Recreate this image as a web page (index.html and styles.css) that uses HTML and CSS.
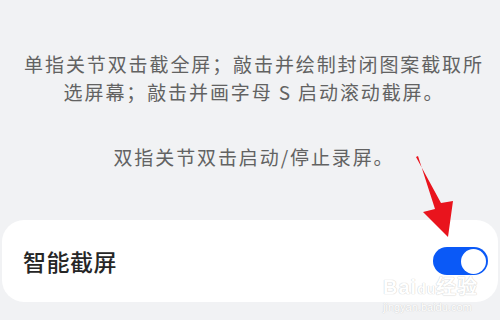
FILE: index.html
```html
<!DOCTYPE html>
<html lang="zh-CN">
<head>
<meta charset="utf-8">
<link rel="stylesheet" href="styles.css">
</head>
<body>
<div class="page">
  <div class="desc">
    <p class="para">单指关节双击截全屏；敲击并绘制封闭图案截取所选屏幕；敲击并画字母 S 启动滚动截屏。</p>
    <p class="para para2">双指关节双击启动/停止录屏。</p>
  </div>
  <div class="card">
    <span class="label">智能截屏</span>
    <span class="toggle"><span class="knob"></span></span>
  </div>
  <svg class="arrow" width="500" height="320" viewBox="0 0 500 320">
    <polygon points="416,157 441,203 453,201 448,237 423,212 435,209 418,156" fill="#e9141d"/>
  </svg>
  <div class="watermark">
    <div class="wm-main">Bai<span class="wm-du">du</span>经验</div>
    <div class="wm-sub">jingyan.baidu.com</div>
  </div>
</div>
</body>
</html>
```
FILE: styles.css
```css
html, body {
  margin: 0;
  padding: 0;
}
body {
  width: 500px;
  height: 320px;
  background: #f1f2f4;
  font-family: "Noto Sans CJK SC", "Noto Sans", sans-serif;
  overflow: hidden;
}
.page {
  position: relative;
  width: 500px;
  height: 320px;
  display: flex;
  flex-direction: column;
}
.desc {
  padding: 50px 12px 0 20px;
}
.para {
  margin: 0;
  font-size: 19px;
  letter-spacing: 1.9px;
  line-height: 28px;
  color: #626262;
  text-align: center;
}
.para2 {
  margin-top: 37px;
}
.card {
  margin: 49px 2px 0 2px;
  height: 82px;
  background: #ffffff;
  border-radius: 22px;
  display: flex;
  align-items: center;
  justify-content: space-between;
  padding: 0 10px 0 21px;
}
.label {
  font-size: 23px;
  font-weight: 500;
  color: #262626;
  letter-spacing: 0.5px;
}
.toggle {
  width: 55px;
  height: 28px;
  border-radius: 14px;
  background: #0a59f7;
  display: flex;
  align-items: center;
  justify-content: flex-end;
  padding-right: 2px;
  box-sizing: border-box;
}
.knob {
  width: 25px;
  height: 25px;
  border-radius: 50%;
  background: #ffffff;
}
.arrow {
  position: absolute;
  left: 0;
  top: 0;
}
.watermark {
  position: absolute;
  left: 383px;
  top: 276px;
  color: #ffffff;
  font-family: "Liberation Sans", sans-serif;
  text-shadow: 0 0 1px #cfcfcf, 0 0 1px #cfcfcf;
}
.wm-main {
  font-size: 20px;
  font-weight: bold;
  line-height: 22px;
  letter-spacing: 1px;
}
.wm-du {
  font-size: 14px;
}
.wm-sub {
  font-size: 11px;
  line-height: 14px;
  margin-top: 0;
}
```
